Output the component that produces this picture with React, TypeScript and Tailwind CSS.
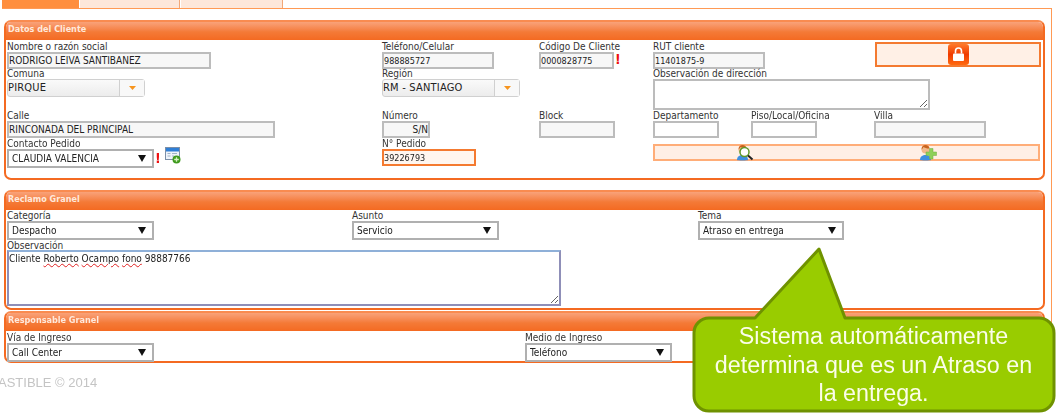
const font = "font-['DejaVu_Sans',sans-serif] [font-stretch:condensed]";

function Label({ children }: { children: string }) {
  return <div className="h-[11px] text-[10px] leading-[11px] text-[#333] whitespace-nowrap">{children}</div>;
}

function TextBox({ value = "", className = "", right = false, white = false }: { value?: string; className?: string; right?: boolean; white?: boolean }) {
  return (
    <input
      readOnly
      defaultValue={value}
      className={`block h-[17px] border-2 border-[#bcbcbc] px-0 text-[#222] outline-none ${white ? "bg-white" : "bg-[#f7f7f7]"} ${right ? "text-right" : ""} ${className}`}
    />
  );
}

function Picker({ value, className = "w-[147px]" }: { value: string; className?: string }) {
  return (
    <div className={`relative h-[19px] ${className}`}>
      <select defaultValue={value} className="block h-full w-full appearance-none rounded-none border-2 border-[#b0b0b0] bg-white pl-[3px] text-[10px] text-[#222] outline-none">
        <option>{value}</option>
      </select>
      <svg className="absolute right-[8px] top-[5px]" width="8" height="8" viewBox="0 0 8 8">
        <path d="M0 1h8L4 8z" fill="#111" />
      </svg>
    </div>
  );
}

function Combo({ value }: { value: string }) {
  return (
    <div className="flex h-[18px] w-[138px] items-center rounded-[3px] border border-[#d0d0d0] bg-gradient-to-b from-[#fafafa] to-[#ececec]">
      <span className="flex-1 text-[11px] font-medium tracking-[0.2px] text-[#222]">{value}</span>
      <span className="flex h-full w-[25px] items-center justify-center border-l border-[#d0d0d0] bg-[#f8f8f8]">
        <svg width="7" height="4" viewBox="0 0 7 4"><path d="M0 0h7L3.5 4z" fill="#f7941d" /></svg>
      </span>
    </div>
  );
}

function Panel({ title, className, children }: { title: string; className: string; children: React.ReactNode }) {
  return (
    <section className={`mx-[2px] flex w-[1041px] shrink-0 flex-col rounded-[7px] border-2 border-[#f46a21] border-t-[#f98b50] bg-white ${className}`}>
      <h2 className="h-[18px] shrink-0 rounded-t-[5px] bg-gradient-to-b from-[#f9a279] via-[#f47a37] via-55% to-[#f46a21] pl-[2px] text-[9px] leading-[15px] font-bold text-[#ffe9dc]">
        {title}
      </h2>
      {children}
    </section>
  );
}

function LockIcon() {
  return (
    <svg width="21" height="21" viewBox="0 0 21 21">
      <defs>
        <linearGradient id="lockBg" x1="0" y1="0" x2="0" y2="1">
          <stop offset="0" stopColor="#ff7a2a" />
          <stop offset="0.5" stopColor="#f03a00" />
          <stop offset="1" stopColor="#ff6a10" />
        </linearGradient>
      </defs>
      <rect width="21" height="21" rx="3" fill="url(#lockBg)" />
      <path d="M7.5 9.5V7a3 3 0 0 1 6 0v2.5" fill="none" stroke="#fff" strokeWidth="1.6" />
      <rect x="5" y="9.5" width="11" height="7.5" rx="1" fill="#fff" />
    </svg>
  );
}

function WindowAddIcon() {
  return (
    <svg width="16" height="17" viewBox="0 0 16 17">
      <rect x="0.5" y="0.5" width="14" height="12" fill="#eef3fa" stroke="#7b8fa8" />
      <rect x="1" y="1" width="13" height="3.5" fill="#2f7fd6" />
      <path d="M2.5 6.5h3M7 6.5h5M2.5 9h3M7 9h2" stroke="#9fb2c8" />
      <circle cx="11.5" cy="12.5" r="4" fill="#3f9a1e" />
      <path d="M11.5 10.2v4.6M9.2 12.5h4.6" stroke="#d7f3c2" strokeWidth="1.3" />
    </svg>
  );
}

function Person() {
  return (
    <>
      <path d="M1 16c0-3.6 2.6-5 5.5-5s5.5 1.4 5.5 5c0 .6-11 .6-11 0z" fill="#3f8fe0" />
      <circle cx="6.5" cy="5.500" r="4" fill="#f2b98a" />
      <path d="M2.500 5.500c0-3.200 2-4.500 4-4.500s4 1.300 4 3.500c-2 .2-5-.5-6-1.500-.5 1-1 1.700-2 2.500z" fill="#c8641e" />
    </>
  );
}

function UserSearchIcon() {
  return (
    <svg width="18" height="17" viewBox="0 0 18 17">
      <Person />
      <circle cx="8.500" cy="8" r="4.500" fill="#fff" stroke="#5f9a2a" strokeWidth="1.500" />
      <path d="M12 11.500l4.500 4" stroke="#222" strokeWidth="2" />
    </svg>
  );
}

function UserAddIcon() {
  return (
    <svg width="18" height="17" viewBox="0 0 18 17">
      <Person />
      <path d="M10.500 4.500h3.500v3.500h3.500v3.500h-3.500v3.500h-3.500v-3.500h-3.500v-3.500h3.500z" fill="#8ed05a" stroke="#6fae40" strokeWidth="0.500" />
    </svg>
  );
}

function Callout() {
  return (
    <div className="absolute left-[690px] top-[245px] h-[170px] w-[368px]">
      <svg className="absolute inset-0" width="368" height="170" viewBox="0 0 368 170">
        <path
          d="M19 73H65L129 4l26 69H349a15 15 0 0 1 15 15V151a15 15 0 0 1-15 15H19a15 15 0 0 1-15-15V88a15 15 0 0 1 15-15z"
          fill="#99cc00"
          stroke="#6f9200"
          strokeWidth="3"
          strokeLinejoin="round"
        />
      </svg>
      <p className="absolute left-[3px] top-[77px] w-[361px] text-center font-['Liberation_Sans',sans-serif] text-[23.300px] leading-[28.500px] text-[#fbfde8]">
        Sistema automáticamente
        <br />
        determina que es un Atraso en
        <br />
        la entrega.
      </p>
    </div>
  );
}

export default function App() {
  return (
    <div className={`relative h-[416px] w-[1058px] overflow-hidden bg-white ${font}`}>
      <div className="blur-[0.4px]">
        <nav className="ml-[2px] flex h-[9px] w-[1050px] border-b border-[#ff9a55]">
          <div className="w-[77px] bg-[#ff8f3f]" />
          <div className="ml-px w-[100px] border-r border-[#f2a878] bg-[#fde7da]" />
          <div className="ml-px w-[102px] border-r border-[#f2a878] bg-[#fde7da]" />
        </nav>

        <div className="ml-[2px] flex h-[354px] w-[1050px] flex-col border-r border-[#ff9a55] pt-[11px]">
          <Panel title="Datos del Cliente" className="h-[160px]">
            <div className="grid grid-cols-[375px_157px_114px_98px_123px_1fr] grid-rows-[27px_42px_28px_29px] pl-px pt-px">
              <div>
                <Label>Nombre o razón social</Label>
                <TextBox value="RODRIGO LEIVA SANTIBAÑEZ" className="w-[204px] text-[10px]" />
              </div>
              <div>
                <Label>Teléfono/Celular</Label>
                <TextBox value="988885727" className="w-[112px] text-[9px]" />
              </div>
              <div>
                <Label>Código De Cliente</Label>
                <div className="flex items-start">
                  <TextBox value="0000828775" className="w-[75px] text-[9px]" />
                  <span className="ml-[1px] text-[14px] leading-[14px] font-bold text-[#ee1111]">!</span>
                </div>
              </div>
              <div className="col-span-2">
                <Label>RUT cliente</Label>
                <TextBox value="11401875-9" className="w-[112px] text-[9px]" />
              </div>
              <div className="ml-px mt-[1px] flex h-[25px] w-[166px] items-center justify-center self-start border-2 border-[#f47a30] bg-[#fff0e6]">
                <LockIcon />
              </div>

              <div>
                <Label>Comuna</Label>
                <Combo value="PIRQUE" />
              </div>
              <div className="col-span-2">
                <Label>Región</Label>
                <Combo value="RM - SANTIAGO" />
              </div>
              <div className="col-span-3">
                <Label>Observación de dirección</Label>
                <div className="h-[31px] w-[277px] resize overflow-hidden border-2 border-[#bcbcbc] bg-white" />
              </div>

              <div>
                <Label>Calle</Label>
                <TextBox value="RINCONADA DEL PRINCIPAL" className="w-[268px] text-[10px]" />
              </div>
              <div>
                <Label>Número</Label>
                <TextBox value="S/N" right className="w-[48px] text-[10px]" />
              </div>
              <div>
                <Label>Block</Label>
                <TextBox className="w-[76px]" />
              </div>
              <div>
                <Label>Departamento</Label>
                <TextBox white className="w-[66px]" />
              </div>
              <div>
                <Label>Piso/Local/Oficina</Label>
                <TextBox white className="w-[66px]" />
              </div>
              <div>
                <Label>Villa</Label>
                <TextBox className="w-[112px]" />
              </div>

              <div>
                <Label>Contacto Pedido</Label>
                <div className="flex items-start">
                  <Picker value="CLAUDIA VALENCIA" />
                  <span className="ml-[1px] mt-[2px] text-[14px] leading-[14px] font-bold text-[#ee1111]">!</span>
                  <span className="ml-[4px] -mt-[2px]"><WindowAddIcon /></span>
                </div>
              </div>
              <div className="col-span-2">
                <Label>N° Pedido</Label>
                <TextBox value="39226793" className="w-[94px] border-[#f47a30] bg-[#fff6ef] text-[9px]" />
              </div>
              <div className="col-span-3 pt-[6px]">
                <div className="flex h-[17px] w-[387px] items-center gap-[165px] border-2 border-[#ffad78] bg-[#ffefe5] pl-[81px]">
                  <UserSearchIcon />
                  <UserAddIcon />
                </div>
              </div>
            </div>
          </Panel>

          <Panel title="Reclamo Granel" className="mt-[10px] h-[120px]">
            <div className="flex flex-col pl-px">
              <div className="grid grid-cols-[345px_346px_1fr]">
                <div>
                  <Label>Categoría</Label>
                  <Picker value="Despacho" />
                </div>
                <div>
                  <Label>Asunto</Label>
                  <Picker value="Servicio" />
                </div>
                <div>
                  <Label>Tema</Label>
                  <Picker value="Atraso en entrega" className="w-[146px]" />
                </div>
              </div>
              <div className="-mb-px"><Label>Observación</Label></div>
              <div className="h-[56px] w-[554px] resize overflow-hidden border-2 border-[#8f8fb8] border-t-[#8fb0d8] bg-white text-[10px] leading-[14px] text-[#222]">
                Cliente{" "}
                <span className="underline decoration-[#e02020] decoration-wavy decoration-1">Roberto</span>{" "}
                <span className="underline decoration-[#e02020] decoration-wavy decoration-1">Ocampo</span>{" "}
                <span className="underline decoration-[#e02020] decoration-wavy decoration-1">fono</span> 98887766
              </div>
            </div>
          </Panel>

          <Panel title="Responsable Granel" className="mt-px h-[52px] border-t-[#f46a21]">
            <div className="grid grid-cols-[518px_1fr] pl-px pt-px">
              <div>
                <Label>Vía de Ingreso</Label>
                <Picker value="Call Center" />
              </div>
              <div>
                <Label>Medio de Ingreso</Label>
                <Picker value="Teléfono" />
              </div>
            </div>
          </Panel>
        </div>

        <footer className="mt-[12px] -ml-[2px] font-['Liberation_Sans',sans-serif] text-[13px] leading-[16px] text-[#c4c4c4]">
          ASTIBLE © 2014
        </footer>
      </div>

      <Callout />
    </div>
  );
}
